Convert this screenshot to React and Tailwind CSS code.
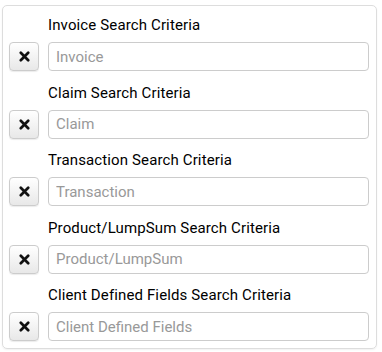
import React from 'react'

// Search criteria panel: one row per criteria type, each with a clear button
const ROWS = [
  { label: 'Invoice Search Criteria', placeholder: 'Invoice' },
  { label: 'Claim Search Criteria', placeholder: 'Claim' },
  { label: 'Transaction Search Criteria', placeholder: 'Transaction' },
  { label: 'Product/LumpSum Search Criteria', placeholder: 'Product/LumpSum' },
  { label: 'Client Defined Fields Search Criteria', placeholder: 'Client Defined Fields' },
]

function RemoveIcon() {
  return (
    <svg width="11" height="11" viewBox="0 0 11 11" aria-hidden="true">
      <path d="M1.8 1.8 L9.2 9.2 M9.2 1.8 L1.8 9.2" stroke="#111" strokeWidth="2.7" strokeLinecap="round" />
    </svg>
  )
}

function CriteriaRow({ label, placeholder }) {
  return (
    <div className="flex flex-col">
      <div className="ml-[39px] h-[20px] mb-[7px] text-[15px] leading-[20px] font-normal tracking-[0.13px] text-black">
        {label}
      </div>
      <div className="flex items-center gap-[9px]">
        <button
          type="button"
          className="w-[30px] h-[29px] flex items-center justify-center rounded-[4px] border border-[#ccc] bg-gradient-to-b from-white to-[#e8e8e8] shadow-[0_1px_1px_rgba(0,0,0,0.08)]"
        >
          <RemoveIcon />
        </button>
        <input
          type="text"
          placeholder={placeholder}
          className="w-[321px] h-[29px] px-[7px] rounded-[4px] border border-[#ccc] bg-white text-[15px] text-[#555] placeholder:text-[#999] outline-none"
        />
      </div>
    </div>
  )
}

export default function App() {
  return (
    <div className="w-[382px] h-[352px] bg-white pt-[5px] pl-[2px]" style={{ fontFamily: 'Roboto, "Liberation Sans", sans-serif' }}>
      <div className="w-[375px] h-[344px] border border-[#ddd] rounded-[5px] shadow-[0_1px_2px_rgba(0,0,0,0.06)] pt-[9px] pl-[6px] pr-[7px] flex flex-col gap-[11.5px]">
        {ROWS.map(r => (
          <CriteriaRow key={r.label} label={r.label} placeholder={r.placeholder} />
        ))}
      </div>
    </div>
  )
}
